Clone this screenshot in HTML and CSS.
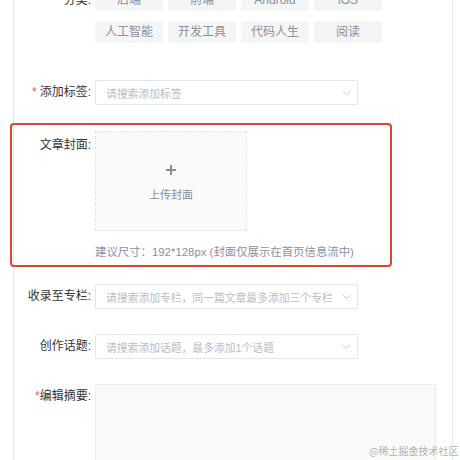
FILE: index.html
```html
<!DOCTYPE html>
<html lang="zh">
<head>
<meta charset="utf-8">
<link rel="stylesheet" href="styles.css">
</head>
<body>
<div class="panel">
  <div class="row row-cat">
    <div class="label label-cat"><span class="req">*</span> 分类:</div>
    <div class="cats">
      <span class="cat">后端</span><span class="cat">前端</span><span class="cat">Android</span><span class="cat">iOS</span>
      <span class="cat">人工智能</span><span class="cat">开发工具</span><span class="cat">代码人生</span><span class="cat">阅读</span>
    </div>
  </div>

  <div class="row row-tags">
    <div class="label"><span class="req req-sp">*</span>添加标签:</div>
    <div class="select"><span class="ph">请搜索添加标签</span><svg class="chev" width="9" height="6" viewBox="0 0 9 6"><path d="M1 1l3.5 3.5L8 1" fill="none" stroke="#c9cdd4" stroke-width="1"/></svg></div>
  </div>

  <div class="highlight">
    <div class="row row-cover">
      <div class="label label-cover">文章封面:</div>
      <div class="cover-col">
        <div class="upload">
          <svg class="plus" width="10" height="10" viewBox="0 0 10 10"><path d="M5 0v10M0 5h10" stroke="#86909c" stroke-width="2"/></svg>
          <span class="up-text">上传封面</span>
        </div>
        <div class="hint">建议尺寸：192*128px (封面仅展示在首页信息流中)</div>
      </div>
    </div>
  </div>

  <div class="row row-col">
    <div class="label">收录至专栏:</div>
    <div class="select"><span class="ph">请搜索添加专栏，同一篇文章最多添加三个专栏</span><svg class="chev" width="9" height="6" viewBox="0 0 9 6"><path d="M1 1l3.5 3.5L8 1" fill="none" stroke="#c9cdd4" stroke-width="1"/></svg></div>
  </div>

  <div class="row row-topic">
    <div class="label">创作话题:</div>
    <div class="select"><span class="ph">请搜索添加话题，最多添加1个话题</span><svg class="chev" width="9" height="6" viewBox="0 0 9 6"><path d="M1 1l3.5 3.5L8 1" fill="none" stroke="#c9cdd4" stroke-width="1"/></svg></div>
  </div>

  <div class="row row-sum">
    <div class="label"><span class="req">*</span>编辑摘要:</div>
    <div class="textarea"></div>
  </div>
</div>
<div class="watermark">@稀土掘金技术社区</div>
</body>
</html>
```

FILE: styles.css
```css
html, body {
  margin: 0;
  padding: 0;
  background: #fff;
  width: 460px;
  height: 460px;
  overflow: hidden;
  font-family: "Liberation Sans", "Noto Sans CJK SC", sans-serif;
}
body { position: relative; }

.panel {
  margin-left: 13px;
  width: 438px;
  margin-top: -11px;
  height: 520px;
  border-left: 1px solid #e8e9ec;
  border-right: 1px solid #e8e9ec;
  display: flex;
  flex-direction: column;
}

.row {
  display: flex;
  align-items: flex-start;
  gap: 4px;
}

.label {
  width: 77px;
  flex: none;
  text-align: right;
  font-size: 12px;
  line-height: 25px;
  color: #333;
  white-space: nowrap;
}
.req { color: #f0554a; }
.req-sp { margin-right: 3px; }

.label-cat { line-height: 22px; }

.cats {
  display: grid;
  grid-template-columns: repeat(4, 68px);
  column-gap: 5px;
  row-gap: 10px;
}
.cat {
  height: 22px;
  line-height: 22px;
  background: #f4f5f5;
  border-radius: 2px;
  text-align: center;
  font-size: 12px;
  color: #8a919f;
}

.row-tags { margin-top: 37px; }

.select {
  width: 263px;
  height: 25px;
  box-sizing: border-box;
  border: 1px solid #e5e6eb;
  border-radius: 2px;
  display: flex;
  align-items: center;
  padding: 0 6px 0 10px;
  background: #fff;
}
.ph {
  flex: 1;
  font-size: 10.8px;
  color: #b9bdc4;
  white-space: nowrap;
  overflow: hidden;
}
.chev { flex: none; margin-left: 1px; }

.highlight {
  margin-top: 18px;
  margin-left: -4px;
  width: 382px;
  box-sizing: border-box;
  border: 2px solid #d6463b;
  border-radius: 4px;
  padding: 6px 0 4px 2px;
}

.label-cover { padding-top: 2px; line-height: 24px; }

.cover-col { display: flex; flex-direction: column; }

.upload {
  width: 152px;
  height: 100px;
  box-sizing: border-box;
  border: 1px dashed #e3e4e8;
  background: #fafafa;
  display: flex;
  flex-direction: column;
  align-items: center;
  padding-top: 33px;
}
.plus { display: block; }
.up-text {
  margin-top: 13px;
  font-size: 11px;
  color: #86909c;
  line-height: 14px;
}
.hint {
  margin-top: 12px;
  font-size: 11.4px;
  line-height: 18px;
  color: #8a919f;
  white-space: nowrap;
}

.row-col { margin-top: 17px; }
.row-topic { margin-top: 25px; }
.row-sum { margin-top: 25px; }

.textarea {
  width: 341px;
  height: 120px;
  box-sizing: border-box;
  border: 1px solid #ececee;
  background: #fafafa;
  border-radius: 2px;
}

.watermark {
  position: absolute;
  left: 369px;
  top: 444px;
  font-size: 10px;
  line-height: 14px;
  color: #b4b4b4;
  font-family: "Noto Sans CJK SC", sans-serif;
  white-space: nowrap;
}
```
